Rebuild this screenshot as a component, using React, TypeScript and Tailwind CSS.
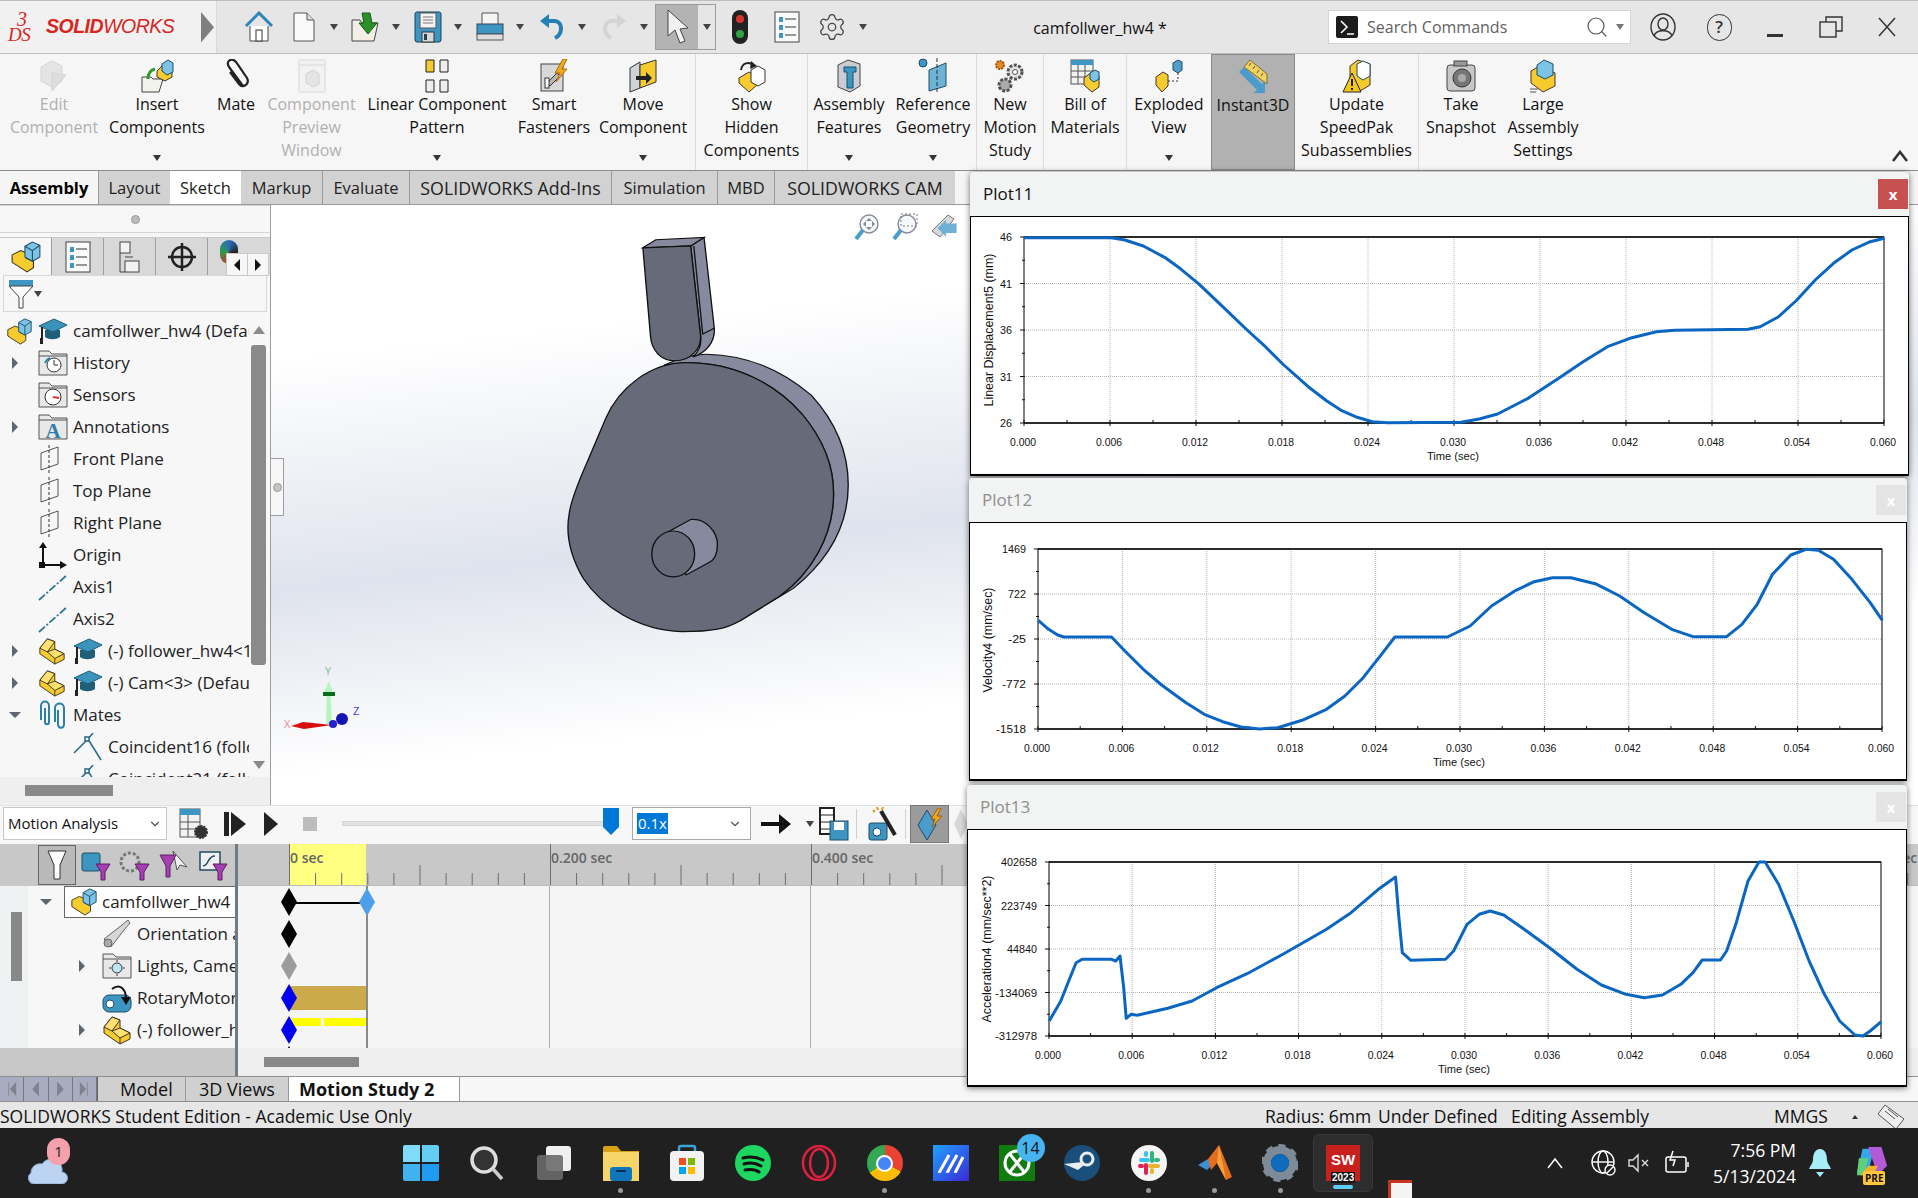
import React from 'react'
import { ChevronDown, Search, Settings } from 'lucide-react'

const Caret = ({ className = 'fill-[#444]' }: { className?: string }) => (
  <svg width="8" height="6" viewBox="0 0 8 6" className={className}>
    <path d="M0 0h8L4 6z" />
  </svg>
)

const Part = ({ size = 26 }: { size?: number }) => (
  <svg width={size} height={size} viewBox="0 0 28 30">
    <polygon points="1,12 9,2 17,5 17,13 27,18 27,24 17,29 1,18" fill="#f6cb2e" stroke="#3a3320" />
    <polygon points="1,12 9,2 17,5 9,16" fill="#ffe071" stroke="#3a3320" />
    <polygon points="9,16 17,13 27,18 17,23" fill="#ffe071" stroke="#3a3320" />
    <path d="M17 23v6" stroke="#3a3320" />
  </svg>
)

const Asm = ({ size = 26, faded = false }: { size?: number; faded?: boolean }) => (
  <svg width={size} height={size} viewBox="0 0 28 30" opacity={faded ? 0.25 : 1}>
    <polygon points="1,13 9,9 14,11 14,16 21,19 21,25 15,29 1,20" fill="#f6cb2e" stroke="#3a3320" />
    <polygon points="13,5 20,1 27,4 27,15 20,19 13,15" fill="#7cc3e6" stroke="#1f4c66" />
    <path d="M13 5l7 4 7-5M20 9v10" fill="none" stroke="#1f4c66" />
  </svg>
)

const Cap = () => (
  <svg width="30" height="28" viewBox="0 0 30 28">
    <path d="M7 13v7c4 3 11 3 15 0v-7z" fill="#1f5f78" />
    <polygon points="1,9 16,2 29,8 15,15" fill="#3a93b8" stroke="#1d5e79" />
    <path d="M4 10v12" stroke="#222" strokeWidth="2" />
    <rect x="2" y="21" width="3" height="6" fill="#222" />
  </svg>
)

const FolderBox = ({ children }: { children: React.ReactNode }) => (
  <svg width="30" height="28" viewBox="0 0 30 28">
    <path d="M1 26V2h10l3 3h15v21z" fill="#e8e8e8" stroke="#555" />
    <path d="M1 7h28" stroke="#555" />
    {children}
  </svg>
)

const Plane = () => (
  <svg width="22" height="28" viewBox="0 0 22 28">
    <polygon points="3,8 20,2 20,19 3,25" fill="none" stroke="#555" />
    <path d="M11 0v28" stroke="#333" strokeDasharray="3 2" />
  </svg>
)

const Origin = () => (
  <svg width="30" height="28" viewBox="0 0 30 28">
    <path d="M5 4v20h20" fill="none" stroke="#111" strokeWidth="2" />
    <path d="M1 7l4-6 4 6zM22 20l7 4-7 4z" fill="#111" />
    <rect x="1" y="21" width="6" height="6" fill="#111" />
  </svg>
)

const Axis = () => (
  <svg width="30" height="28" viewBox="0 0 30 28">
    <path d="M1 27L29 2" stroke="#2e7894" strokeWidth="1.8" strokeDasharray="8 2 2 2" />
  </svg>
)

const Clips = () => (
  <svg width="30" height="30" viewBox="0 0 30 30" fill="none" stroke="#2b7fa8" strokeWidth="2">
    <path d="M3 20V6c0-6 8-6 8 0v16c0 3-4 3-4 0V8" />
    <path d="M17 22V8c0-6 9-6 9 0v16c0 5-6 5-6 0V10" />
  </svg>
)

const Coincident = () => (
  <svg width="30" height="28" viewBox="0 0 30 28" fill="none" stroke="#2e6f8c" strokeWidth="1.6">
    <path d="M1 20L15 6l13 21M15 6l5-6" />
    <rect x="12" y="4" width="4" height="4" fill="#fff" />
  </svg>
)

const Arrow = ({ open = false }: { open?: boolean }) => (
  <svg width="12" height="12" viewBox="0 0 12 12" className="fill-[#5c6670]">
    {open ? <path d="M0 3h12L6 9z" /> : <path d="M3 0l6 6-6 6z" />}
  </svg>
)

const HomeIcon = () => (
  <svg width="32" height="32" viewBox="0 0 32 32">
    <path d="M7 15v15h18V15" fill="#fff" stroke="#444" />
    <path d="M3 15L16 2l13 13" fill="none" stroke="#2e86b8" strokeWidth="3" />
    <rect x="13" y="19" width="6" height="11" fill="#fff" stroke="#333" />
  </svg>
)

const DocIcon = () => (
  <svg width="28" height="32" viewBox="0 0 28 32">
    <path d="M4 2h13l7 7v21H4z" fill="#fafafa" stroke="#555" />
    <path d="M17 2v7h7" fill="#ddd" stroke="#555" />
  </svg>
)

const OpenIcon = () => (
  <svg width="32" height="32" viewBox="0 0 32 32">
    <path d="M2 9h8l2 3h16l-4 18H2z" fill="#f2f0e6" stroke="#444" />
    <path d="M12 2h8l2 10h5l-9 11-9-11h5z" fill="#2c8f2c" stroke="#175d17" />
  </svg>
)

const SaveIcon = () => (
  <svg width="30" height="32" viewBox="0 0 30 32">
    <rect x="2" y="1" width="26" height="30" rx="2" fill="#3d96c2" stroke="#17425c" />
    <rect x="7" y="2" width="16" height="15" fill="#f4f4f4" stroke="#555" />
    <path d="M10 6h10M10 9h10M10 12h10" stroke="#777" />
    <rect x="9" y="21" width="12" height="10" fill="#d8d8d8" stroke="#333" />
    <rect x="11" y="23" width="3" height="6" fill="#245" />
  </svg>
)

const PrintIcon = () => (
  <svg width="32" height="32" viewBox="0 0 32 32">
    <path d="M8 2h16v12H8z" fill="#f5f5f5" stroke="#555" />
    <rect x="3" y="13" width="26" height="10" fill="#3d96c2" stroke="#345" />
    <rect x="3" y="23" width="26" height="6" fill="#ddd" stroke="#555" />
  </svg>
)

const UndoIcon = ({ on = true }: { on?: boolean }) => (
  <svg width="28" height="30" viewBox="0 0 28 30" fill="none" stroke={on ? '#2480b5' : '#d4d4d4'} strokeWidth="4">
    <path d={on ? 'M9 9h8c8 1 8 13 0 17' : 'M19 9h-8c-8 1-8 13 0 17'} />
    <path d={on ? 'M2 9l9-7v14z' : 'M26 9l-9-7v14z'} fill={on ? '#2480b5' : '#d4d4d4'} stroke="none" />
  </svg>
)

const Cursor = () => (
  <svg width="26" height="36" viewBox="0 0 26 36">
    <path d="M4 1v26l7-6 5 13 5-2-5-12 8-1z" fill="#f2f2f2" stroke="#444" />
  </svg>
)

const Traffic = () => (
  <svg width="18" height="36" viewBox="0 0 18 36">
    <rect x="1" y="1" width="16" height="34" rx="8" fill="#222" />
    <circle cx="9" cy="10" r="4" fill="#d9342c" />
    <circle cx="9" cy="25" r="4" fill="#2fa344" />
  </svg>
)

const ListIcon = () => (
  <svg width="26" height="32" viewBox="0 0 26 32">
    <rect x="1" y="1" width="24" height="30" fill="#fafafa" stroke="#444" />
    <path d="M5 6h4v5H5zM5 14h4v5H5zM5 22h4v5H5z" fill="#3d96c2" />
    <path d="M11 8h11M11 16h11M11 24h11" stroke="#333" />
  </svg>
)

const ribbonIcons: Record<string, React.ReactNode> = {
  edit: (
    <svg width="32" height="34" viewBox="0 0 32 34" opacity="0.3">
      <polygon points="3,8 14,2 24,7 24,22 14,28 3,22" fill="#bbb" stroke="#888" />
      <path d="M14 14l14 2-14 16z" fill="#aaa" stroke="#888" />
    </svg>
  ),
  insert: (
    <svg width="34" height="34" viewBox="0 0 34 34">
      <path d="M2 18h9l2 2h10l-4 13H2z" fill="#f3f3ee" stroke="#444" />
      <path d="M8 20c0-7 3-9 7-10" fill="none" stroke="#2c9a2c" strokeWidth="3" />
      <polygon points="17,12 25,4 32,8 32,18 25,22 17,18" fill="#f6cb2e" stroke="#433" />
      <polygon points="22,5 28,1 33,4 33,13 27,16 22,12" fill="#7cc3e6" stroke="#1f4c66" />
    </svg>
  ),
  mate: (
    <svg width="28" height="34" viewBox="0 0 28 34" fill="none" stroke="#222" strokeWidth="2.2">
      <path d="M21 27L7 8c-4-6 3-10 7-5l11 16c3 6-4 11-8 6L8 13" />
    </svg>
  ),
  preview: (
    <svg width="28" height="34" viewBox="0 0 28 34" opacity="0.4">
      <rect x="1" y="1" width="26" height="32" fill="#eee" stroke="#aaa" />
      <path d="M1 6h26" stroke="#aaa" />
      <polygon points="8,15 15,11 21,15 21,25 15,28 8,24" fill="#ccc" stroke="#999" />
    </svg>
  ),
  linear: (
    <svg width="26" height="34" viewBox="0 0 26 34">
      <path d="M2 1h8v12H2z" fill="#f6cb2e" stroke="#222" />
      <path d="M16 1h8v12h-8zM2 21h8v12H2zM16 21h8v12h-8z" fill="#eee" stroke="#222" />
    </svg>
  ),
  smart: (
    <svg width="30" height="34" viewBox="0 0 30 34">
      <rect x="2" y="5" width="22" height="27" fill="#d8d8d8" stroke="#444" />
      <path d="M8 24l10-10 3 3-10 10z" fill="#b6b6b6" stroke="#333" />
      <rect x="6" y="19" width="4" height="10" fill="#fff" stroke="#333" />
      <path d="M24 0l-8 14h5l-4 9 11-13h-5l5-10z" fill="#f0a81c" stroke="#a86c10" />
    </svg>
  ),
  move: (
    <svg width="30" height="34" viewBox="0 0 30 34">
      <polygon points="2,9 12,3 12,29 2,33" fill="#cfd2d6" stroke="#333" />
      <polygon points="12,6 28,1 28,23 12,29" fill="#f6cb2e" stroke="#333" />
      <path d="M8 17h10v-4l6 6-6 6v-4H8z" fill="#222" />
    </svg>
  ),
  show: (
    <svg width="30" height="34" viewBox="0 0 30 34">
      <path d="M4 11c1-7 8-9 12-5" fill="none" stroke="#222" strokeWidth="2" />
      <polygon points="14,2 20,7 13,10" fill="#222" />
      <polygon points="2,19 12,13 20,18 20,26 12,33 2,24" fill="#f6cb2e" stroke="#433" />
      <polygon points="14,11 21,7 28,11 28,23 21,27 14,23" fill="#fff" stroke="#333" />
    </svg>
  ),
  feat: (
    <svg width="26" height="34" viewBox="0 0 26 34">
      <path d="M2 6l10-5 12 4v22l-10 6-12-5z" fill="#c9ccd2" stroke="#444" />
      <path d="M8 8h12v5h-3v16h-6V13H8z" fill="#3d96c2" stroke="#1f4c66" />
    </svg>
  ),
  ref: (
    <svg width="30" height="36" viewBox="0 0 30 36">
      <circle cx="5" cy="5" r="4" fill="#3d96c2" stroke="#1f4c66" />
      <polygon points="11,12 28,5 28,28 11,33" fill="#6db3d6" stroke="#1f4c66" />
      <path d="M19 0v36" stroke="#234" strokeDasharray="4 2" />
    </svg>
  ),
  motion: (
    <svg width="30" height="34" viewBox="0 0 30 34">
      <circle cx="5" cy="6" r="4" fill="#e58a23" stroke="#9b5810" strokeWidth="2" strokeDasharray="2 1" />
      <circle cx="20" cy="13" r="7" fill="#e4e4e4" stroke="#555" strokeWidth="3" strokeDasharray="3 1.5" />
      <circle cx="20" cy="13" r="2.5" fill="#fff" stroke="#555" />
      <circle cx="10" cy="26" r="6" fill="#aaa" stroke="#555" strokeWidth="3" strokeDasharray="3 1.5" />
    </svg>
  ),
  bom: (
    <svg width="30" height="34" viewBox="0 0 30 34">
      <rect x="1" y="1" width="22" height="24" fill="#f2f2f2" stroke="#555" />
      <rect x="1" y="1" width="22" height="5" fill="#3d96c2" />
      <path d="M1 12h22M1 18h22M8 6v19M15 6v19" stroke="#555" />
      <polygon points="14,19 22,13 29,17 29,28 22,33 14,26" fill="#f6cb2e" stroke="#433" />
      <polygon points="20,14 25,11 29,13 29,20 24,23 20,20" fill="#7cc3e6" stroke="#1f4c66" />
    </svg>
  ),
  exploded: (
    <svg width="30" height="34" viewBox="0 0 30 34">
      <polygon points="2,18 9,13 14,16 14,27 8,33 2,26" fill="#f6cb2e" stroke="#433" />
      <path d="M14 22h10V13" fill="none" stroke="#333" strokeDasharray="2 2" />
      <polygon points="19,4 24,1 28,3 28,11 24,14 19,11" fill="#4f9fc8" stroke="#1f4c66" />
    </svg>
  ),
  instant: (
    <svg width="32" height="34" viewBox="0 0 32 34">
      <polygon points="7,7 13,0 30,14 30,24" fill="#f2d25c" stroke="#7a6c2e" />
      <path d="M14 3l-2 3M18 6l-2 3M22 10l-2 3M26 13l-2 3" stroke="#555" />
      <path d="M2 12l5-5 18 17 3-3v12H16l4-3z" fill="#4b9ccb" />
    </svg>
  ),
  speedpak: (
    <svg width="30" height="34" viewBox="0 0 30 34">
      <polygon points="8,7 16,1 28,5 28,26 18,32 8,28" fill="#f6cb2e" stroke="#433" />
      <polygon points="15,5 21,2 28,5 28,17 21,21 15,17" fill="#fff" stroke="#1f4c66" />
      <polygon points="10,14 19,33 1,33" fill="#f6c81c" stroke="#222" />
      <path d="M10 20v7M10 29v2" stroke="#222" strokeWidth="2" />
    </svg>
  ),
  snapshot: (
    <svg width="30" height="34" viewBox="0 0 30 34">
      <rect x="1" y="6" width="28" height="26" rx="3" fill="#c8c8c8" stroke="#444" />
      <rect x="8" y="2" width="13" height="5" fill="#999" stroke="#444" />
      <circle cx="16" cy="19" r="9" fill="#777" stroke="#333" />
      <circle cx="16" cy="19" r="4" fill="#aaa" />
    </svg>
  ),
  large: (
    <svg width="28" height="34" viewBox="0 0 28 34">
      <polygon points="2,12 12,6 26,14 26,27 14,33 2,24" fill="#f6cb2e" stroke="#433" />
      <polygon points="8,6 15,1 24,5 24,16 16,20 8,16" fill="#7cc3e6" stroke="#1f4c66" />
      <path d="M1 30h8M1 33h6" stroke="#555" />
    </svg>
  ),
}

type RibbonItem = {
  w: string
  lines: string[]
  icon: string
  off?: boolean
  caret?: boolean
  sep?: boolean
  on?: boolean
}

const ribbon: RibbonItem[] = [
  { w: 'w-[108px]', lines: ['Edit', 'Component'], icon: 'edit', off: true },
  { w: 'w-[98px]', lines: ['Insert', 'Components'], icon: 'insert', caret: true },
  { w: 'w-[60px]', lines: ['Mate'], icon: 'mate' },
  { w: 'w-[91px]', lines: ['Component', 'Preview', 'Window'], icon: 'preview', off: true },
  { w: 'w-[160px]', lines: ['Linear Component', 'Pattern'], icon: 'linear', caret: true },
  { w: 'w-[74px]', lines: ['Smart', 'Fasteners'], icon: 'smart' },
  { w: 'w-[105px]', lines: ['Move', 'Component'], icon: 'move', caret: true, sep: true },
  { w: 'w-[112px]', lines: ['Show', 'Hidden', 'Components'], icon: 'show', sep: true },
  { w: 'w-[82px]', lines: ['Assembly', 'Features'], icon: 'feat', caret: true },
  { w: 'w-[87px]', lines: ['Reference', 'Geometry'], icon: 'ref', caret: true, sep: true },
  { w: 'w-[67px]', lines: ['New', 'Motion', 'Study'], icon: 'motion', sep: true },
  { w: 'w-[83px]', lines: ['Bill of', 'Materials'], icon: 'bom', sep: true },
  { w: 'w-[84px]', lines: ['Exploded', 'View'], icon: 'exploded', caret: true },
  { w: 'w-[84px]', lines: ['Instant3D'], icon: 'instant', on: true },
  { w: 'w-[124px]', lines: ['Update', 'SpeedPak', 'Subassemblies'], icon: 'speedpak', sep: true },
  { w: 'w-[84px]', lines: ['Take', 'Snapshot'], icon: 'snapshot' },
  { w: 'w-[80px]', lines: ['Large', 'Assembly', 'Settings'], icon: 'large' },
]

const commandTabs = [
  { name: 'Assembly', w: 'w-[98px]', style: 'font-bold text-black bg-[#f5f5f5] text-[16.5px]' },
  { name: 'Layout', w: 'w-[72px]', style: 'bg-[#d2d2d2] border-l border-[#9a9a9a] text-[16.5px]' },
  { name: 'Sketch', w: 'w-[71px]', style: 'bg-white text-[16.5px]' },
  { name: 'Markup', w: 'w-[81px]', style: 'bg-[#d2d2d2] text-[16.5px]' },
  { name: 'Evaluate', w: 'w-[87px]', style: 'bg-[#d2d2d2] border-l border-[#9a9a9a] text-[16.5px]' },
  { name: 'SOLIDWORKS Add-Ins', w: 'w-[202px]', style: 'bg-[#d2d2d2] border-l border-[#9a9a9a] text-[17.8px]' },
  { name: 'Simulation', w: 'w-[106px]', style: 'bg-[#d2d2d2] border-l border-[#9a9a9a] text-[16.5px]' },
  { name: 'MBD', w: 'w-[57px]', style: 'bg-[#d2d2d2] border-l border-[#9a9a9a] text-[16.5px]' },
  { name: 'SOLIDWORKS CAM', w: 'w-[181px]', style: 'bg-[#d2d2d2] border-l border-[#9a9a9a] text-[17.8px]' },
]

const TitleBar = () => {
  const group = (icon: React.ReactNode, w: string, key: string) => (
    <div key={key} className={`${w} flex items-center`}>
      <div className="w-[32px] flex justify-center">{icon}</div>
      <div className="ml-[10px] flex">
        <Caret />
      </div>
    </div>
  )
  return (
    <div className="h-[54px] flex bg-[#e6e6e6] border-t border-b border-[#bdbdbd]">
      <div className="w-[217px] flex items-center bg-[#f1f1f1] border-r border-[#d8d8d8] pl-[8px]">
        <div className="w-[38px] flex flex-col font-['Liberation_Serif',serif] italic text-[#d8261f]">
          <span className="pl-[9px] text-[20px] leading-[15px]">3</span>
          <span className="text-[19px] leading-[16px] tracking-tight">DS</span>
        </div>
        <div className="italic text-[#d8261f] text-[19.5px] font-['Liberation_Sans',sans-serif] tracking-tight">
          <span className="font-bold">SOLID</span>
          <span>WORKS</span>
        </div>
        <svg width="13" height="36" viewBox="0 0 13 36" className="ml-[27px] fill-[#7f7f7f]">
          <path d="M0 0l13 18L0 36z" transform="translate(0 3) scale(1 .85)" />
        </svg>
      </div>
      <div className="w-[26px]" />
      <div className="w-[45px] flex items-center">
        <HomeIcon />
      </div>
      {group(<DocIcon />, 'w-[62px]', 'doc')}
      {group(<OpenIcon />, 'w-[62px]', 'open')}
      {group(<SaveIcon />, 'w-[62px]', 'save')}
      {group(<PrintIcon />, 'w-[62px]', 'print')}
      {group(<UndoIcon />, 'w-[62px]', 'undo')}
      {group(<UndoIcon on={false} />, 'w-[57px]', 'redo')}
      <div className="w-[61px] my-[3px] flex border border-[#9b9b9b]">
        <div className="w-[42px] bg-[#b3b3b3] flex items-center justify-center">
          <Cursor />
        </div>
        <div className="flex-1 flex items-center justify-center">
          <Caret />
        </div>
      </div>
      <div className="w-[48px] flex items-center justify-center">
        <Traffic />
      </div>
      <div className="w-[46px] flex items-center justify-center">
        <ListIcon />
      </div>
      <div className="w-[44px] flex items-center justify-center">
        <Settings size={30} strokeWidth={1} className="text-[#444]" />
      </div>
      <div className="flex items-center pl-[5px]">
        <Caret />
      </div>
      <div className="flex-1 flex items-center justify-center pl-[5px] pt-[2px] text-[16px] text-[#111]">
        camfollwer_hw4 *
      </div>
      <div className="w-[303px] my-[9px] bg-white border border-[#d4d4d4] flex items-center pl-[7px] pr-[6px]">
        <svg width="22" height="22" viewBox="0 0 22 22">
          <rect width="22" height="22" rx="2" fill="#1b1b1b" />
          <path d="M5 5l6 6-6 6M11 18h7" fill="none" stroke="#fff" strokeWidth="1.5" />
        </svg>
        <span className="ml-[9px] text-[16px] text-[#5f5f5f] flex-1">Search Commands</span>
        <Search size={24} strokeWidth={1.2} className="text-[#555]" />
        <div className="ml-[7px] flex">
          <Caret className="fill-[#777]" />
        </div>
      </div>
      <div className="flex pr-[3px] pl-[4px]">
        <div className="w-[56px] flex items-center justify-center">
          <svg width="26" height="28" viewBox="0 0 26 28" fill="none" stroke="#333" strokeWidth="1.4">
            <ellipse cx="13" cy="14" rx="12" ry="13" />
            <ellipse cx="13" cy="11" rx="5" ry="6" />
            <path d="M4 23c2-7 16-7 18 0" />
          </svg>
        </div>
        <div className="w-[56px] flex items-center justify-center">
          <div className="w-[25px] h-[27px] rounded-full border-[1.5px] border-[#333] flex items-center justify-center text-[17px] font-semibold text-[#333]">
            ?
          </div>
        </div>
        <div className="w-[56px] flex justify-center pt-[33px]">
          <div className="w-[16px] h-[3px] bg-[#333]" />
        </div>
        <div className="w-[56px] flex items-center justify-center">
          <svg width="24" height="22" viewBox="0 0 24 22" fill="none" stroke="#333" strokeWidth="1.4">
            <path d="M7 6V1h16v14h-6" />
            <rect x="1" y="6" width="16" height="15" />
          </svg>
        </div>
        <div className="w-[56px] flex items-center justify-center">
          <svg width="18" height="20" viewBox="0 0 18 20" stroke="#333" strokeWidth="1.5">
            <path d="M1 1l16 18M17 1L1 19" />
          </svg>
        </div>
      </div>
    </div>
  )
}

const Ribbon = () => (
  <div className="h-[117px] flex bg-[#f6f6f6] border-b border-[#8c8c8c] text-[#111] relative">
    {ribbon.map((r) => (
      <div
        key={r.lines.join(' ')}
        className={`${r.w} shrink-0 flex flex-col items-center pt-[4px] pb-[3px] ${r.on ? 'bg-[#b1b1b1] border border-[#8a8a8a]' : ''} ${r.sep ? 'border-r border-[#dcdcdc]' : ''} ${r.off ? 'text-[#b0b0b0]' : ''}`}
      >
        <div className="h-[35px] flex items-center justify-center">{ribbonIcons[r.icon]}</div>
        <div className="text-[16px] leading-[23px] text-center whitespace-nowrap">
          {r.lines.map((l) => (
            <div key={l}>{l}</div>
          ))}
        </div>
        {r.caret && (
          <div className="mt-auto mb-[6px] flex">
            <Caret className="fill-[#333]" />
          </div>
        )}
      </div>
    ))}
    <div className="flex-1 flex items-end justify-end pr-[9px] pb-[8px]">
      <svg width="18" height="12" viewBox="0 0 18 12" fill="none" stroke="#333" strokeWidth="2.6">
        <path d="M2 11l7-9 7 9" />
      </svg>
    </div>
  </div>
)

const CommandTabs = () => (
  <div className="h-[34px] flex bg-[#f5f5f5] border-b border-[#9a9a9a] text-[#222]">
    {commandTabs.map((t) => (
      <div key={t.name} className={`${t.w} ${t.style} shrink-0 flex items-center justify-center pt-[1px]`}>
        {t.name}
      </div>
    ))}
  </div>
)

const featureTabs = [
  <Asm key="a" size={32} />,
  <ListIcon key="b" />,
  <svg key="c" width="26" height="32" viewBox="0 0 26 32" fill="#f3f3f3" stroke="#444">
    <rect x="3" y="1" width="10" height="11" />
    <rect x="8" y="20" width="14" height="11" />
    <path d="M3 12v19h5M8 16h8" fill="none" />
  </svg>,
  <svg key="d" width="30" height="30" viewBox="0 0 30 30" fill="none" stroke="#222" strokeWidth="2.5">
    <circle cx="15" cy="15" r="10" />
    <path d="M15 1v28M1 15h28" />
  </svg>,
]

const Row = ({
  lead,
  icon,
  icon2,
  text,
}: {
  lead?: React.ReactNode
  icon?: React.ReactNode
  icon2?: React.ReactNode
  text: string
}) => (
  <div className="h-[32px] shrink-0 flex items-center whitespace-nowrap">
    <div className="w-[38px] shrink-0 flex justify-center pr-[8px]">{lead}</div>
    <div className="w-[35px] shrink-0 flex items-center">{icon}</div>
    {icon2 && <div className="w-[35px] shrink-0 flex items-center">{icon2}</div>}
    <span>{text}</span>
  </div>
)

const FeatureTree = () => (
  <div className="w-[271px] shrink-0 flex flex-col bg-[#f7f7f8] border-r border-[#9e9e9e]">
    <div className="h-[28px] shrink-0 flex items-center justify-center border-y border-[#d4d4d4]">
      <div className="w-[9px] h-[9px] rounded-full bg-[#bbb] border border-[#999]" />
    </div>
    <div className="h-[38px] shrink-0 mt-[4px] flex bg-[#d8d8d8] border-t border-[#c9c9c9] relative">
      {featureTabs.map((t, i) => (
        <div
          key={i}
          className={`w-[52px] flex items-center justify-center border-r border-[#9e9e9e] ${i === 0 ? 'bg-[#f7f7f8]' : ''}`}
        >
          {t}
        </div>
      ))}
      <div className="flex-1 flex items-start pl-[12px] pt-[2px]">
        <div className="w-[18px] h-[24px] rounded-full bg-[conic-gradient(#2b6cb8,#222,#c93333,#2a9d46,#2b6cb8)]" />
      </div>
      <div className="absolute left-[226px] top-[15px] w-[43px] h-[23px] bg-[#f7f7f8] border border-[#c9c9c9] flex">
        <div className="flex-1 flex items-center justify-center border-r border-[#c9c9c9]">
          <svg width="6" height="12" viewBox="0 0 6 12" className="fill-[#111]">
            <path d="M6 0v12L0 6z" />
          </svg>
        </div>
        <div className="flex-1 flex items-center justify-center">
          <svg width="6" height="12" viewBox="0 0 6 12" className="fill-[#111]">
            <path d="M0 0v12l6-6z" />
          </svg>
        </div>
      </div>
    </div>
    <div className="h-[37px] shrink-0 mx-[3px] flex items-center border border-[#d8d8d8] bg-[#f7f7f8] pl-[4px]">
      <svg width="26" height="30" viewBox="0 0 26 30">
        <path d="M1 1h24v6H1z" fill="#3d96c2" />
        <path d="M1 7h24L15 18v11h-4V18z" fill="#fff" stroke="#444" />
      </svg>
      <Caret />
    </div>
    <div className="h-[465px] shrink-0 flex pt-[3px]">
      <div className="w-[249px] shrink-0 overflow-hidden flex flex-col text-[17px] text-[#222]">
        <Row
          lead={
            <div className="ml-[8px] flex">
              <Asm size={27} />
            </div>
          }
          icon={<Cap />}
          text="camfollwer_hw4 (Default<Display State-1>)"
        />
        <Row
          lead={<Arrow />}
          icon={
            <FolderBox>
              <circle cx="16" cy="16" r="7" fill="#fff" stroke="#333" />
              <path d="M16 11v5h4" fill="none" stroke="#333" />
              <path d="M7 14a9 9 0 0 1 5-5" fill="none" stroke="#2b7fa8" strokeWidth="2" />
            </FolderBox>
          }
          text="History"
        />
        <Row
          icon={
            <FolderBox>
              <circle cx="15" cy="16" r="8" fill="#fff" stroke="#333" />
              <path d="M15 16l6 1" stroke="#d33" strokeWidth="2" />
            </FolderBox>
          }
          text="Sensors"
        />
        <Row
          lead={<Arrow />}
          icon={
            <FolderBox>
              <text x="15" y="25" textAnchor="middle" fill="#2e7fa8" className="text-[21px] font-bold font-['Liberation_Serif',serif]">
                A
              </text>
            </FolderBox>
          }
          text="Annotations"
        />
        <Row icon={<Plane />} text="Front Plane" />
        <Row icon={<Plane />} text="Top Plane" />
        <Row icon={<Plane />} text="Right Plane" />
        <Row icon={<Origin />} text="Origin" />
        <Row icon={<Axis />} text="Axis1" />
        <Row icon={<Axis />} text="Axis2" />
        <Row lead={<Arrow />} icon={<Part size={28} />} icon2={<Cap />} text="(-) follower_hw4<1> (Default)" />
        <Row lead={<Arrow />} icon={<Part size={28} />} icon2={<Cap />} text="(-) Cam<3> (Default<Display>)" />
        <Row lead={<Arrow open />} icon={<Clips />} text="Mates" />
        <Row icon={<div />} icon2={<Coincident />} text="Coincident16 (follower)" />
        <Row icon={<div />} icon2={<Coincident />} text="Coincident21 (follower)" />
      </div>
      <div className="w-[19px] shrink-0 flex flex-col items-center">
        <svg width="12" height="8" viewBox="0 0 12 8" className="fill-[#8a8a8a] mt-[11px]">
          <path d="M6 0l6 8H0z" />
        </svg>
        <div className="w-[15px] h-[320px] mt-[11px] rounded-[3px] bg-[#8a8a8a]" />
        <svg width="12" height="8" viewBox="0 0 12 8" className="fill-[#8a8a8a] mt-[96px]">
          <path d="M0 0h12L6 8z" />
        </svg>
      </div>
    </div>
    <div className="flex-1 bg-[#efefef] pl-[25px] pt-[8px]">
      <div className="w-[88px] h-[11px] bg-[#8a8a8a]" />
    </div>
  </div>
)

const Viewport = () => (
  <div className="flex-1 relative overflow-hidden bg-[linear-gradient(174deg,#ffffff_20%,#dfe3ed_50%,#ffffff_74%,#ffffff_100%)]">
    <div className="absolute left-0 top-[253px] w-[13px] h-[58px] bg-[#f7f7f8] border border-l-0 border-[#9e9e9e] flex items-center justify-center">
      <div className="w-[9px] h-[9px] rounded-full bg-[#c4c4c4] border border-[#999]" />
    </div>
    <svg
      width="700"
      height="600"
      viewBox="0 0 1568 1568"
      preserveAspectRatio="none"
      className="absolute left-0 top-[-5px]"
      stroke="#111"
      strokeWidth="3"
    >
      <path
        d="M880 432C920 410 950 403 975 403C1070 405 1150 450 1210 510C1265 580 1293 660 1293 745C1293 850 1250 940 1170 1015L1050 1100L1140 1035C1210 975 1258 880 1260 775C1262 700 1240 630 1190 560C1130 480 1040 425 930 425Z"
        fill="#878a9e"
      />
      <path
        d="M930 425C1040 425 1130 480 1190 560C1240 630 1262 700 1260 775C1258 880 1210 975 1140 1035L1050 1100C1020 1120 990 1128 920 1128C820 1125 740 1060 700 990C670 930 660 870 668 820C672 780 695 720 710 680L750 570C780 490 850 425 930 425Z"
        fill="#666a79"
      />
      <path d="M888 868L940 835C975 830 1000 870 1000 900C1000 920 995 940 980 948L930 980Z" fill="#878a9e" />
      <ellipse cx="901" cy="925" rx="48" ry="60" fill="#666a79" />
      <path d="M940 120L970 98L993 335C995 370 975 400 945 410C960 395 965 375 962 352Z" fill="#878a9e" />
      <path d="M833 125L862 104L970 98L940 120Z" fill="#878a9e" />
      <path d="M833 125L940 120L962 352C965 390 940 420 905 420C875 420 852 395 850 355Z" fill="#666a79" />
      <path d="M947 120L967 350L993 335" fill="none" />
    </svg>
    <svg width="90" height="80" viewBox="0 0 90 80" className="absolute left-[7px] top-[457px]">
      <text x="50" y="13" textAnchor="middle" fill="#7fbf8f" className="text-[11px]">
        Y
      </text>
      <text x="6" y="66" fill="#f08a8a" className="text-[11px]">
        X
      </text>
      <text x="75" y="53" fill="#3d3df0" className="text-[11px]">
        Z
      </text>
      <path d="M48 62h6l-2-40h-3z" fill="#b5f5c0" />
      <path d="M45 33l6-14 5 14z" fill="#b5f5c0" />
      <rect x="45" y="30" width="12" height="4" fill="#0d6b1f" />
      <path d="M54 63l-28 4-13-3 12-4z" fill="#d90f0f" />
      <circle cx="64" cy="57" r="6" fill="#1414b4" />
      <circle cx="55" cy="62" r="4" fill="#2222cc" />
    </svg>
    <div className="absolute left-[583px] top-[8px] flex gap-[12px]">
      {[0, 1].map((k) => (
        <svg key={k} width="26" height="28" viewBox="0 0 26 28">
          <circle cx="15" cy="11" r="9" fill="#f4f8fa" stroke="#889" strokeWidth="1.4" />
          <path d="M9 17l-7 9" stroke="#4b9ccb" strokeWidth="4" />
          {k === 0 && <path d="M15 5l3 3h-6zM15 17l3-3h-6zM9 11l3-3v6zM21 11l-3-3v6z" fill="#888" />}
          {k === 1 && <rect x="9" y="1" width="16" height="12" fill="none" stroke="#777" strokeDasharray="2 2" />}
        </svg>
      ))}
      <svg width="30" height="28" viewBox="0 0 30 28">
        <path d="M2 18L18 2l6 4L10 24z" fill="#d8d8d8" stroke="#777" />
        <path d="M29 10v10H18v4l-9-9 9-9v4z" fill="#6fb0d4" transform="translate(-1 1) scale(.95)" />
      </svg>
    </div>
  </div>
)

const Diamond = ({ fill }: { fill: string }) => (
  <svg width="16" height="28" viewBox="0 0 16 28">
    <path d="M8 0l8 14-8 14-8-14z" fill={fill} />
  </svg>
)

const ticks = Array.from({ length: 64 }, (_, i) => i)

const rulerLabels = [
  { t: '0 sec', c: 'left-[52px]' },
  { t: '0.200 sec', c: 'left-[313px]' },
  { t: '0.400 sec', c: 'left-[574px]' },
  { t: '1.200 sec', c: 'left-[1618px]' },
]

const MotionToolbar = () => (
  <div className="h-[39px] flex items-center pb-[3px] bg-[#f7f7f8] border-t border-[#dfe3e8]">
    <div className="ml-[3px] w-[164px] h-[33px] bg-white border border-[#c8c8c8] flex items-center justify-between px-[4px] text-[15px] text-[#111]">
      Motion Analysis
      <ChevronDown size={14} className="text-[#555]" />
    </div>
    <div className="ml-[12px] w-[30px] flex">
      <svg width="30" height="32" viewBox="0 0 30 32">
        <rect x="1" y="1" width="20" height="28" fill="#f2f2f2" stroke="#555" />
        <rect x="1" y="1" width="20" height="6" fill="#3d96c2" />
        <path d="M1 14h20M1 21h20M9 7v22" stroke="#555" />
        <circle cx="22" cy="24" r="6" fill="#333" stroke="#333" strokeWidth="2" strokeDasharray="2 1" />
      </svg>
    </div>
    <div className="ml-[15px] w-[22px] flex">
      <svg width="22" height="24" viewBox="0 0 22 24" className="fill-[#222]">
        <path d="M0 0h5v24H0zM7 0l15 12L7 24z" />
      </svg>
    </div>
    <div className="ml-[18px] w-[14px] flex">
      <svg width="14" height="24" viewBox="0 0 14 24" className="fill-[#222]">
        <path d="M0 0l14 12L0 24z" />
      </svg>
    </div>
    <div className="ml-[25px] w-[14px] h-[14px] bg-[#bdbdbd]" />
    <div className="ml-[25px] w-[263px] h-[5px] bg-[#e1e4e4] border border-[#d2d6d6] relative">
      <svg width="18" height="27" viewBox="0 0 18 27" className="absolute right-[-16px] top-[-14px] fill-[#0078d7]">
        <path d="M1 0h16v19l-8 8-8-8z" />
      </svg>
    </div>
    <div className="ml-[27px] w-[119px] h-[33px] bg-white border border-[#a8a8a8] flex items-center justify-between pl-[4px] pr-[8px] text-[15px]">
      <span className="bg-[#0078d7] text-white px-[1px] leading-[21px]">0.1x</span>
      <ChevronDown size={14} className="text-[#555]" />
    </div>
    <div className="ml-[10px] w-[30px] flex">
      <svg width="30" height="20" viewBox="0 0 30 20" className="fill-[#111]">
        <path d="M0 8h18V0l12 10-12 10v-8H0z" />
      </svg>
    </div>
    <div className="ml-[15px] flex">
      <Caret />
    </div>
    <div className="ml-[5px] w-[30px] flex">
      <svg width="30" height="34" viewBox="0 0 30 34">
        <rect x="1" y="1" width="14" height="26" fill="#fff" stroke="#222" strokeWidth="2" />
        <path d="M1 8h14M1 15h14M1 22h14" stroke="#222" />
        <rect x="11" y="14" width="18" height="19" fill="#3d96c2" stroke="#1f4c66" />
        <rect x="15" y="15" width="10" height="8" fill="#fff" />
      </svg>
    </div>
    <div className="ml-[7px] h-[30px] border-l border-[#d0d0d0]" />
    <div className="ml-[10px] w-[34px] flex">
      <svg width="32" height="34" viewBox="0 0 32 34">
        <rect x="2" y="16" width="18" height="17" rx="2" fill="#3d96c2" stroke="#1f4c66" />
        <circle cx="10" cy="25" r="4" fill="#fff" stroke="#1f4c66" />
        <path d="M14 4l14 24" stroke="#222" strokeWidth="4" />
        <path d="M6 3l2 2M10 0l1 3M16 0l-1 3" stroke="#e59722" strokeWidth="2" />
      </svg>
    </div>
    <div className="ml-[4px] h-[30px] border-l border-[#d0d0d0]" />
    <div className="ml-[4px] w-[39px] h-[38px] bg-[#9b9b9b] border border-[#777] flex items-center justify-center">
      <svg width="32" height="32" viewBox="0 0 32 32">
        <path d="M13 2l9 15-9 15-9-15z" fill="#4b9ccb" stroke="#1f4c66" />
        <path d="M24 0l-7 11h4l-3 8 10-11h-5l4-8z" fill="#f0a81c" stroke="#9a5c10" />
      </svg>
    </div>
    <svg width="14" height="30" viewBox="0 0 14 30" className="ml-[5px] fill-[#d8d8d8]">
      <path d="M7 0l7 15-7 15-7-15z" />
    </svg>
  </div>
)

const MotionLeft = () => (
  <div className="w-[238px] shrink-0 flex flex-col bg-[#f7f7f8] border-r-[3px] border-[#6f7b86]">
    <div className="h-[42px] shrink-0 bg-[#c8c8c8] flex items-center pl-[38px]">
      <div className="w-[38px] h-[40px] bg-[#b9b9b9] border border-[#666] flex items-center justify-center">
        <svg width="20" height="32" viewBox="0 0 20 32">
          <path d="M1 2h18L13 16v14H7V16z" fill="#fff" stroke="#333" />
        </svg>
      </div>
      {[0, 1, 2, 3].map((k) => (
        <div key={k} className="w-[39px] flex justify-center relative">
          <svg width="32" height="32" viewBox="0 0 32 32">
            {k === 0 && <rect x="2" y="4" width="18" height="18" rx="2" fill="#3d96c2" stroke="#1f4c66" />}
            {k === 1 && <circle cx="11" cy="13" r="9" fill="#ccc" stroke="#777" strokeWidth="3" strokeDasharray="3 2" />}
            {k === 2 && <path d="M15 2l4 19 3-5 7 2z" fill="#f2f2f2" stroke="#555" />}
            {k === 3 && <path d="M3 3h20v18H3zM6 17c6 0 4-10 12-10" fill="#f0f0f0" stroke="#1f4c66" strokeWidth="1.5" />}
            <path d={k === 2 ? 'M2 6h16L12 17v11H8V17z' : 'M16 15h14l-5 8v8h-4v-8z'} fill="#a63fb0" stroke="#5c1c63" />
          </svg>
        </div>
      ))}
    </div>
    <div className="h-[162px] shrink-0 flex">
      <div className="w-[28px] shrink-0 bg-[#eef2f2] pt-[26px] pl-[11px]">
        <div className="w-[11px] h-[69px] bg-[#888]" />
      </div>
      <div className="flex-1 min-w-0 overflow-hidden flex flex-col text-[17px] text-[#222] whitespace-nowrap">
        <div className="h-[32px] shrink-0 flex items-center">
          <div className="w-[36px] shrink-0 flex justify-center">
            <Arrow open />
          </div>
          <div className="flex-1 h-[32px] bg-white border border-[#666] border-r-0 flex items-center pl-[5px] gap-[4px]">
            <Asm size={28} />
            camfollwer_hw4
          </div>
        </div>
        {[
          { t: 'Orientation and Camera Views', i: 'orient' },
          { t: 'Lights, Cameras and Scene', i: 'lights', a: true },
          { t: 'RotaryMotor1', i: 'motor' },
          { t: '(-) follower_hw4<1>', i: 'part', a: true },
        ].map((r) => (
          <div key={r.t} className="h-[32px] shrink-0 flex items-center">
            <div className="w-[74px] shrink-0 flex justify-end pr-[14px]">{r.a && <Arrow />}</div>
            <div className="w-[35px] shrink-0 flex">
              {r.i === 'orient' && (
                <svg width="30" height="30" viewBox="0 0 30 30">
                  <path d="M2 20L20 6l6-5 2 3-6 7-13 17z" fill="#d6d6d6" stroke="#666" />
                  <circle cx="6" cy="24" r="4" fill="#aaa" stroke="#666" />
                </svg>
              )}
              {r.i === 'lights' && (
                <FolderBox>
                  <circle cx="15" cy="16" r="5" fill="#bfe4f5" stroke="#333" />
                  <path d="M15 8v2M15 22v2M7 16h2M21 16h2" stroke="#333" />
                </FolderBox>
              )}
              {r.i === 'motor' && (
                <svg width="30" height="30" viewBox="0 0 30 30">
                  <rect x="1" y="12" width="28" height="17" rx="6" fill="#3d96c2" stroke="#1f4c66" />
                  <circle cx="8" cy="21" r="4" fill="#fff" stroke="#1f4c66" />
                  <path d="M10 6c8-6 14 0 14 10" fill="none" stroke="#111" strokeWidth="2" />
                  <path d="M19 14h10l-5 8z" fill="#111" />
                </svg>
              )}
              {r.i === 'part' && <Part size={30} />}
            </div>
            <span>{r.t}</span>
          </div>
        ))}
      </div>
    </div>
    <div className="flex-1 bg-[#c8c8c8]" />
  </div>
)

const Timeline = () => (
  <div className="flex-1 flex flex-col min-w-0 bg-[#f5f5f5]">
    <div className="h-[42px] shrink-0 bg-[#c8c8c8] relative overflow-hidden border-b border-[#bbb]">
      <div className="absolute left-[51px] top-0 w-[77px] h-full bg-[#ffff80]" />
      <svg width="1680" height="42" className="absolute left-0 top-0" stroke="#6e6e6e">
        {ticks.map((i) => {
          const x = 51.5 + 26.1 * i
          const h = i % 5 === 0 ? (i % 10 === 0 ? 42 : 21) : 13
          return <line key={i} x1={x} x2={x} y1={42 - h} y2={42} />
        })}
      </svg>
      {rulerLabels.map((l) => (
        <span key={l.t} className={`absolute ${l.c} top-[3px] text-[14px] font-semibold text-[#666]`}>
          {l.t}
        </span>
      ))}
    </div>
    <div className="h-[162px] shrink-0 relative overflow-hidden">
      <div className="absolute left-[311px] top-0 bottom-0 w-px bg-[#b0b0b0]" />
      <div className="absolute left-[572px] top-0 bottom-0 w-px bg-[#b0b0b0]" />
      <div className="absolute left-[128px] top-0 bottom-0 w-[2px] bg-[#8a8a8a]" />
      <div className="absolute left-[52px] top-[100px] w-[76px] h-[24px] bg-[#ccaa4c]" />
      <div className="absolute left-[54px] top-[132px] w-[29px] h-[8px] bg-[#ffff00]" />
      <div className="absolute left-[86px] top-[132px] w-[42px] h-[8px] bg-[#ffff00]" />
      <div className="absolute left-[56px] top-[16px] w-[66px] h-[1.5px] bg-black" />
      <div className="absolute left-[43px] top-[2px]">
        <Diamond fill="#000" />
      </div>
      <div className="absolute left-[43px] top-[34px]">
        <Diamond fill="#000" />
      </div>
      <div className="absolute left-[43px] top-[66px]">
        <Diamond fill="#9c9c9c" />
      </div>
      <div className="absolute left-[43px] top-[98px]">
        <Diamond fill="#0000f0" />
      </div>
      <div className="absolute left-[43px] top-[130px]">
        <Diamond fill="#0000f0" />
      </div>
      <div className="absolute left-[43px] top-[160px]">
        <Diamond fill="#000" />
      </div>
      <div className="absolute left-[121px] top-[2px]">
        <Diamond fill="#4d9fec" />
      </div>
    </div>
    <div className="flex-1 bg-[#efefef] pl-[26px] pt-[9px]">
      <div className="w-[95px] h-[10px] bg-[#888]" />
    </div>
  </div>
)

const BottomTabs = () => (
  <div className="h-[26px] flex bg-[#f7f7f7] border-y border-[#8f8f8f] text-[18px] text-[#111]">
    <div className="w-[98px] flex bg-[#a9abc0] border-r border-[#666]">
      {[
        'M8 2v16M17 2l-7 8 7 8',
        'M15 2l-7 8 7 8z',
        'M9 2l7 8-7 8z',
        'M16 2v16M7 2l7 8-7 8',
      ].map((d) => (
        <div key={d} className="w-[24.5px] flex items-center justify-center border-r border-[#777]">
          <svg width="20" height="20" viewBox="0 0 24 20" className="fill-[#80828f] stroke-[#80828f]">
            <path d={d} />
          </svg>
        </div>
      ))}
    </div>
    <div className="w-[88px] bg-[#d0d0d0] border-r border-[#9a9a9a] flex items-center pl-[22px]">Model</div>
    <div className="w-[103px] bg-[#d0d0d0] border-r border-[#9a9a9a] flex items-center pl-[13px]">3D Views</div>
    <div className="w-[171px] bg-white border-r border-[#9a9a9a] flex items-center pl-[10px] font-bold">
      Motion Study 2
    </div>
  </div>
)

const StatusBar = () => (
  <div className="h-[26px] flex items-center pt-[3px] bg-[#e6e6e6] text-[17.5px] text-[#111] whitespace-nowrap">
    <div className="w-[1265px]">SOLIDWORKS Student Edition - Academic Use Only</div>
    <div className="w-[113px]">Radius: 6mm</div>
    <div className="w-[133px]">Under Defined</div>
    <div className="w-[263px]">Editing Assembly</div>
    <div className="w-[78px]">MMGS</div>
    <div className="w-[24px] flex">
      <svg width="6" height="4" viewBox="0 0 6 4" className="fill-[#333]">
        <path d="M3 0l3 4H0z" />
      </svg>
    </div>
    <svg width="30" height="26" viewBox="0 0 30 26" fill="#eee" stroke="#555">
      <path d="M2 10L9 1l19 14-8 10z" />
      <path d="M9 7l10 8M12 5l10 8" />
    </svg>
  </div>
)

const taskIcons: { id: string; w: string; dot?: string; node: React.ReactNode }[] = [
  {
    id: 'start',
    w: 'w-[66px]',
    node: (
      <svg width="36" height="36" viewBox="0 0 36 36">
        <path d="M0 2q0-2 2-2h15v17H0z" fill="#7fdcf8" />
        <path d="M19 0h15q2 0 2 2v15H19z" fill="#63cdf3" />
        <path d="M0 19h17v17H2q-2 0-2-2z" fill="#3fb2ef" />
        <path d="M19 19h17v15q0 2-2 2H19z" fill="#1f9bf0" />
      </svg>
    ),
  },
  {
    id: 'search',
    w: 'w-[66px]',
    node: (
      <svg width="36" height="36" viewBox="0 0 36 36" fill="none">
        <circle cx="15" cy="15" r="12" fill="#333" stroke="#ddd" strokeWidth="3.5" />
        <path d="M24 24l9 10" stroke="#ccc" strokeWidth="3.5" />
      </svg>
    ),
  },
  {
    id: 'views',
    w: 'w-[67px]',
    node: (
      <svg width="36" height="36" viewBox="0 0 36 36">
        <rect x="10" y="1" width="25" height="25" rx="3" fill="#f0f0f0" />
        <rect x="1" y="10" width="26" height="25" rx="3" fill="#6a6a6a" fillOpacity="0.9" />
      </svg>
    ),
  },
  {
    id: 'files',
    w: 'w-[67px]',
    dot: 'bg-[#9a9a9a]',
    node: (
      <svg width="36" height="36" viewBox="0 0 36 36">
        <path d="M0 3q0-2 2-2h12l4 5h18v30H0z" fill="#d8a215" />
        <path d="M0 7h36v29H0z" fill="#f8d568" />
        <rect x="7" y="22" width="22" height="14" rx="3" fill="#0f75bd" />
        <path d="M13 26h10" stroke="#072f4e" strokeWidth="2" />
      </svg>
    ),
  },
  {
    id: 'store',
    w: 'w-[66px]',
    node: (
      <svg width="36" height="38" viewBox="0 0 36 38">
        <path d="M10 7V4q0-2 2-2h12q2 0 2 2v3" fill="none" stroke="#37a5d8" strokeWidth="2.5" />
        <rect x="1" y="7" width="34" height="30" rx="4" fill="#f2f2f2" />
        <rect x="10" y="14" width="7" height="7" fill="#f25022" />
        <rect x="19" y="14" width="7" height="7" fill="#7fba00" />
        <rect x="10" y="23" width="7" height="7" fill="#00a4ef" />
        <rect x="19" y="23" width="7" height="7" fill="#ffb900" />
      </svg>
    ),
  },
  {
    id: 'spotify',
    w: 'w-[66px]',
    node: (
      <svg width="36" height="36" viewBox="0 0 36 36" fill="none" stroke="#111" strokeWidth="3" strokeLinecap="round">
        <circle cx="18" cy="18" r="18" fill="#1ed760" stroke="none" />
        <path d="M8 13c7-2 14-1 20 2M9 19c6-2 12-1 17 2M10 25c5-1 10-1 14 2" />
      </svg>
    ),
  },
  {
    id: 'opera',
    w: 'w-[65px]',
    node: (
      <svg width="36" height="36" viewBox="0 0 36 36" fill="none" stroke="#e0203f" strokeWidth="2.5">
        <ellipse cx="18" cy="18" rx="16" ry="17" />
        <ellipse cx="18" cy="18" rx="9" ry="14" />
      </svg>
    ),
  },
  {
    id: 'chrome',
    w: 'w-[67px]',
    dot: 'bg-[#9a9a9a]',
    node: (
      <div className="w-[36px] h-[36px] rounded-full bg-[conic-gradient(#ea4335_0_33%,#fbbc05_33%_66%,#34a853_66%_100%)] flex items-center justify-center">
        <div className="w-[17px] h-[17px] rounded-full bg-[#4285f4] border-[2px] border-white" />
      </div>
    ),
  },
  {
    id: 'app',
    w: 'w-[66px]',
    node: (
      <div className="w-[36px] h-[36px] bg-[linear-gradient(135deg,#1fa2ff,#3a2ad8)] flex items-center justify-center">
        <svg width="28" height="20" viewBox="0 0 28 20" fill="none" stroke="#fff" strokeWidth="3">
          <path d="M2 20L12 2M10 20L20 2M18 20L26 4" />
        </svg>
      </div>
    ),
  },
  {
    id: 'xbox',
    w: 'w-[65px]',
    node: (
      <div className="relative">
        <div className="w-[36px] h-[36px] bg-[#107c10] flex items-center justify-center">
          <svg width="28" height="28" viewBox="0 0 28 28" fill="none" stroke="#fff" strokeWidth="3">
            <circle cx="14" cy="14" r="12" />
            <path d="M6 4l16 20M22 4L6 24" />
          </svg>
        </div>
        <div className="absolute right-[-10px] top-[-11px] w-[28px] h-[28px] rounded-full bg-[#47b4f0] text-[#111] text-[16px] flex items-center justify-center">
          14
        </div>
      </div>
    ),
  },
  {
    id: 'steam',
    w: 'w-[66px]',
    node: (
      <svg width="36" height="36" viewBox="0 0 36 36">
        <circle cx="18" cy="18" r="18" fill="#1a4f7c" />
        <circle cx="23" cy="14" r="6" fill="none" stroke="#e8eef2" strokeWidth="3" />
        <path d="M0 19l14 6 6-5-2-3" fill="#e8eef2" />
      </svg>
    ),
  },
  {
    id: 'slack',
    w: 'w-[67px]',
    dot: 'bg-[#9a9a9a]',
    node: (
      <svg width="36" height="36" viewBox="0 0 36 36" strokeWidth="4" strokeLinecap="round">
        <circle cx="18" cy="18" r="18" fill="#f5f5f5" />
        <path d="M10 15h7M15 8v2" stroke="#36c5f0" />
        <path d="M21 8v8M27 15h-2" stroke="#2eb67d" />
        <path d="M27 21h-8M21 27v-2" stroke="#ecb22e" />
        <path d="M15 28v-8M9 21h2" stroke="#e01e5a" />
      </svg>
    ),
  },
  {
    id: 'matlab',
    w: 'w-[65px]',
    dot: 'bg-[#9a9a9a]',
    node: (
      <svg width="36" height="38" viewBox="0 0 36 38">
        <path d="M1 21l10-6 5 5-6 6z" fill="#3e8fd0" />
        <path d="M11 15L22 1l13 32-6 3-9-17-6 7z" fill="#e36f1e" />
        <path d="M22 1l-2 18 9 17z" fill="#f8a13a" />
      </svg>
    ),
  },
  {
    id: 'gear',
    w: 'w-[66px]',
    dot: 'bg-[#9a9a9a]',
    node: (
      <svg width="36" height="38" viewBox="0 0 36 38">
        <circle cx="18" cy="19" r="13" fill="none" stroke="#7d8b98" strokeWidth="8" />
        <circle cx="18" cy="19" r="17" fill="none" stroke="#7d8b98" strokeWidth="4" strokeDasharray="7 6" />
        <circle cx="18" cy="19" r="9" fill="#0f6cbd" />
      </svg>
    ),
  },
]

const Taskbar = () => (
  <div className="h-[70px] flex bg-[#202020] text-white relative">
    <div className="w-[388px] relative">
      <svg width="40" height="30" viewBox="0 0 40 30" className="absolute left-[28px] top-[26px]">
        <path d="M6 30a6 6 0 0 1-3-11 9 9 0 0 1 11-9 11 11 0 0 1 20 8 6 6 0 0 1-1 12z" fill="#bcd3f2" stroke="#8aa7d0" />
      </svg>
      <div className="absolute left-[47px] top-[10px] w-[23px] h-[27px] rounded-full bg-[#f4a0ad] text-[#222] text-[15px] flex items-center justify-center">
        1
      </div>
    </div>
    {taskIcons.map((t) => (
      <div key={t.id} className={`${t.w} shrink-0 flex flex-col items-center justify-center relative`}>
        {t.node}
        {t.dot && <div className={`absolute bottom-[5px] w-[5px] h-[5px] rounded-full ${t.dot}`} />}
      </div>
    ))}
    <div className="w-[60px] my-[6px] rounded-[6px] bg-[#2d2d2d] border border-[#383838] shrink-0 flex flex-col items-center pt-[10px] relative">
      <div className="w-[34px] h-[36px] bg-[#c8201d] text-white font-['Liberation_Sans',sans-serif] font-bold text-[15px] leading-none flex items-start pt-[7px] justify-center relative">
        SW
        <span className="absolute bottom-[-2px] left-[5px] bg-[#111] text-white text-[10px] leading-[11px] px-[1px]">2023</span>
      </div>
      <div className="absolute bottom-[2px] w-[20px] h-[4px] rounded bg-[#60cdff]" />
    </div>
    <div className="w-[30px] relative">
      <div className="absolute left-[15px] bottom-0 w-[24px] h-[18px] bg-[#f4f4f4] border-t-[3px] border-l-[3px] border-[#c9341f]" />
    </div>
    <div className="flex-1" />
    <div className="w-[40px] flex items-center justify-center">
      <svg width="18" height="12" viewBox="0 0 18 12" fill="none" stroke="#fff" strokeWidth="1.5">
        <path d="M2 11l7-9 7 9" />
      </svg>
    </div>
    <div className="w-[12px]" />
    <div className="w-[34px] flex items-center justify-center">
      <svg width="26" height="28" viewBox="0 0 26 28" fill="none" stroke="#fff" strokeWidth="1.4">
        <circle cx="12" cy="13" r="11" />
        <ellipse cx="12" cy="13" rx="5" ry="11" />
        <path d="M1 13h22" />
        <circle cx="19" cy="21" r="5" fill="#202020" />
        <path d="M16 24l6-6" />
      </svg>
    </div>
    <div className="w-[36px] flex items-center justify-center">
      <svg width="24" height="24" viewBox="0 0 24 24" fill="none" stroke="#ddd" strokeWidth="1.4">
        <path d="M2 9h4l5-5v16l-5-5H2zM15 9l6 6M21 9l-6 6" />
      </svg>
    </div>
    <div className="w-[40px] flex items-center justify-center">
      <svg width="26" height="28" viewBox="0 0 26 28" fill="none" stroke="#fff" strokeWidth="1.5">
        <rect x="2" y="8" width="20" height="15" rx="2" />
        <path d="M24 13v5" />
        <path d="M9 2l-3 9h5l-2 6" />
      </svg>
    </div>
    <div className="w-[99px] flex flex-col items-end justify-center text-[17.5px] leading-[26px] whitespace-nowrap">
      <span>7:56 PM</span>
      <span>5/13/2024</span>
    </div>
    <div className="w-[46px] flex items-center justify-center pl-[2px]">
      <svg width="24" height="30" viewBox="0 0 24 30" className="fill-[#a8ecf8]">
        <path d="M12 1c5 0 7 5 7 11 0 3 3 6 4 9H1c1-3 4-6 4-9 0-6 2-11 7-11zM8 24h8l-4 5z" />
      </svg>
    </div>
    <div className="w-[76px] flex items-start pt-[16px] pl-[13px] relative">
      <svg width="34" height="36" viewBox="0 0 36 36">
        <path d="M8 4h12l-6 26H2z" fill="#35a8e8" />
        <path d="M14 2h14l6 20-10 10z" fill="#b35ad8" />
        <path d="M4 14h10l-4 18H2z" fill="#5fd07a" />
        <path d="M14 22h10l-4 10h-14z" fill="#f0b330" />
      </svg>
      <span className="absolute left-[21px] top-[43px] h-[14px] px-[2px] bg-[#ffc83d] rounded-[2px] text-[#111] font-bold text-[10px] flex items-center">
        PRE
      </span>
    </div>
  </div>
)

type Frame = { l: number; r: number; t: number; b: number }

type PlotSpec = {
  title: string
  active: boolean
  windowClass: string
  bodyClass: string
  frame: Frame
  origin: [number, number]
  zoomY: number
  yLabels: string[]
  yTitle: string
  yTitleLen: number
  yTitlePos: [number, number]
  points: number[][]
}

const plots: PlotSpec[] = [
  {
    title: 'Plot11',
    active: true,
    windowClass: 'left-[970px] top-[172px] w-[939px] h-[304px]',
    bodyClass: 'h-[260px]',
    frame: { l: 54, r: 914, t: 21, b: 207 },
    origin: [970, 216],
    zoomY: 170,
    yLabels: ['46', '41', '36', '31', '26'],
    yTitle: 'Linear Displacement5 (mm)',
    yTitleLen: 153,
    yTitlePos: [23, 114],
    points: [
      [105, 203], [248, 203], [270, 210], [300, 228], [335, 262], [360, 295], [390, 340], [430, 410], [470, 480],
      [500, 530], [530, 585], [570, 650], [600, 692], [625, 722], [650, 742], [675, 755], [700, 758], [820, 757],
      [850, 747], [880, 732], [930, 685], [980, 625], [1020, 575], [1060, 530], [1100, 503], [1140, 485], [1170, 481],
      [1290, 478], [1310, 470], [1340, 440], [1370, 390], [1400, 330], [1430, 280], [1460, 240], [1490, 215], [1513, 205],
    ],
  },
  {
    title: 'Plot12',
    active: false,
    windowClass: 'left-[969px] top-[478px] w-[938px] h-[303px]',
    bodyClass: 'h-[259px]',
    frame: { l: 69, r: 913, t: 27, b: 207 },
    origin: [969, 521],
    zoomY: 480,
    yLabels: ['1469', '722', '-25', '-772', '-1518'],
    yTitle: 'Velocity4 (mm/sec)',
    yTitleLen: 105,
    yTitlePos: [23, 118],
    points: [
      [128, 418], [145, 445], [160, 462], [170, 468], [248, 468], [270, 510], [300, 565], [330, 612], [370, 665],
      [400, 700], [430, 722], [460, 738], [490, 744], [520, 740], [560, 718], [600, 685], [630, 645], [660, 590],
      [690, 520], [712, 468], [798, 468], [835, 435], [870, 375], [910, 328], [940, 302], [970, 290], [1000, 290],
      [1040, 308], [1080, 345], [1120, 395], [1165, 445], [1200, 467], [1255, 467], [1280, 430], [1305, 370],
      [1330, 280], [1360, 222], [1385, 205], [1405, 208], [1430, 235], [1460, 295], [1490, 365], [1510, 418],
    ],
  },
  {
    title: 'Plot13',
    active: false,
    windowClass: 'left-[967px] top-[785px] w-[940px] h-[302px]',
    bodyClass: 'h-[259px]',
    frame: { l: 82, r: 914, t: 33, b: 207 },
    origin: [967, 828],
    zoomY: 780,
    yLabels: ['402658', '223749', '44840', '-134069', '-312978'],
    yTitle: 'Acceleration4 (mm/sec**2)',
    yTitleLen: 147,
    yTitlePos: [24, 120],
    points: [
      [146, 720], [165, 660], [180, 590], [190, 545], [200, 535], [248, 535], [255, 540], [262, 525], [268, 620],
      [272, 712], [280, 700], [290, 703], [340, 682], [380, 660], [420, 620], [470, 578], [530, 518], [600, 445],
      [640, 395], [685, 325], [713, 288], [718, 400], [724, 515], [738, 538], [795, 535], [808, 510], [830, 430],
      [850, 400], [868, 390], [890, 402], [920, 440], [965, 500], [1010, 565], [1050, 612], [1090, 640], [1120, 650],
      [1150, 642], [1180, 610], [1200, 575], [1215, 537], [1245, 537], [1255, 510], [1270, 430], [1290, 300],
      [1308, 243], [1318, 243], [1340, 310], [1365, 420], [1390, 540], [1415, 640], [1440, 720], [1465, 762],
      [1478, 765], [1490, 750], [1508, 722],
    ],
  },
]

const xLabels = ['0.000', '0.006', '0.012', '0.018', '0.024', '0.030', '0.036', '0.042', '0.048', '0.054', '0.060']

const Chart = ({ p }: { p: PlotSpec }) => {
  const { l, r, t, b } = p.frame
  const dx = (r - l) / 10
  const dy = (b - t) / 4
  const line = p.points
    .map(([x, y]) => `${(960 + x / 1.637 - p.origin[0]).toFixed(1)},${(p.zoomY + y / 3 - p.origin[1]).toFixed(1)}`)
    .join(' ')
  return (
    <svg width="100%" height="100%" className="font-['Liberation_Sans',sans-serif] text-[11px]" fill="#111">
      <g transform="translate(-1 -1)">
        {xLabels.map((_, i) => (
          <line key={i} x1={l + dx * i} x2={l + dx * i} y1={t} y2={b} stroke="#b5b5b5" strokeDasharray="1 1" />
        ))}
        {p.yLabels.map((_, i) => (
          <line key={i} x1={l} x2={r} y1={t + dy * i} y2={t + dy * i} stroke="#b5b5b5" strokeDasharray="1 1" />
        ))}
        <rect x={l} y={t} width={r - l} height={b - t} fill="none" stroke="#111" strokeWidth="1" />
        <line x1={l} x2={r} y1={t} y2={t} stroke="#111" strokeWidth="1.5" />
        <line x1={l} x2={r} y1={b} y2={b} stroke="#111" strokeWidth="1.5" />
        {Array.from({ length: 21 }, (_, i) => (
          <line key={i} x1={l + (dx / 2) * i} x2={l + (dx / 2) * i} y1={b - 3} y2={b + (i % 2 ? 0 : 3)} stroke="#111" />
        ))}
        {Array.from({ length: 9 }, (_, i) => (
          <line key={i} x1={l - (i % 2 ? 2 : 4)} x2={l + 1} y1={t + (dy / 2) * i} y2={t + (dy / 2) * i} stroke="#111" />
        ))}
        <polyline points={line} fill="none" stroke="#0b66c2" strokeWidth="3" strokeLinejoin="round" />
        {p.yLabels.map((y, i) => (
          <text
            key={y}
            x={l - 12}
            y={t + dy * i + 4}
            textAnchor="end"
            textLength={y.length * 6}
            lengthAdjust="spacingAndGlyphs"
          >
            {y}
          </text>
        ))}
        {xLabels.map((x, i) => (
          <text
            key={x}
            x={l + dx * i - 1}
            y={b + 23}
            textAnchor="middle"
            textLength={26}
            lengthAdjust="spacingAndGlyphs"
          >
            {x}
          </text>
        ))}
        <text x={(l + r) / 2 - 1} y={b + 37} textAnchor="middle" textLength={52} lengthAdjust="spacingAndGlyphs">
          Time (sec)
        </text>
        <text
          x={p.yTitlePos[0]}
          y={p.yTitlePos[1]}
          textAnchor="middle"
          textLength={p.yTitleLen}
          lengthAdjust="spacingAndGlyphs"
          className="text-[12px]"
          transform={`rotate(-90 ${p.yTitlePos[0]} ${p.yTitlePos[1]})`}
        >
          {p.yTitle}
        </text>
      </g>
    </svg>
  )
}

const PlotWindow = ({ p }: { p: PlotSpec }) => (
  <div
    className={`absolute ${p.windowClass} flex flex-col rounded-t-[4px] bg-[#f2f3f3] shadow-[0_1px_6px_rgba(0,0,0,0.55)]`}
  >
    <div className={`h-[44px] shrink-0 flex items-center justify-between pl-[13px] pr-[1px] text-[17px] ${p.active ? 'text-[#111]' : 'text-[#8f8f8f]'}`}>
      {p.title}
      <div
        className={`w-[30px] h-[30px] flex items-center justify-center font-bold text-[15px] ${p.active ? 'bg-[#c75050] text-white' : 'bg-[#e4e4e4] text-white'}`}
      >
        x
      </div>
    </div>
    <div className={`${p.bodyClass} bg-white border-t border-b-2 border-x border-black`}>
      <Chart p={p} />
    </div>
  </div>
)

const App = () => (
  <div className="relative w-[1918px] h-[1198px] overflow-hidden flex flex-col font-['Open_Sans','Noto_Sans',sans-serif] bg-white">
    <TitleBar />
    <Ribbon />
    <CommandTabs />
    <div className="h-[600px] shrink-0 flex">
      <FeatureTree />
      <Viewport />
    </div>
    <MotionToolbar />
    <div className="h-[232px] shrink-0 flex">
      <MotionLeft />
      <Timeline />
    </div>
    <BottomTabs />
    <StatusBar />
    <Taskbar />
    {plots.map((p) => (
      <PlotWindow key={p.title} p={p} />
    ))}
  </div>
)

export default App
